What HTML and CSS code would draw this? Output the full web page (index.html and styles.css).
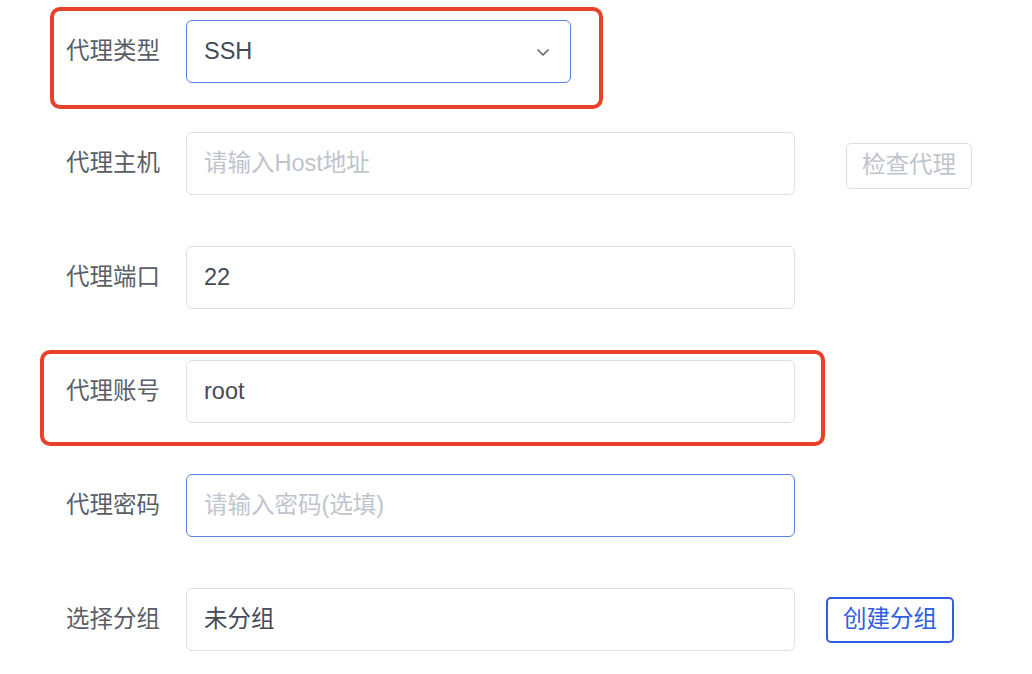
FILE: index.html
```html
<!DOCTYPE html>
<html lang="zh-CN">
  <head>
    <meta charset="UTF-8" />
    <meta name="viewport" content="width=device-width, initial-scale=1.0" />
    <title>代理设置</title>
    <link rel="stylesheet" href="styles.css">
  </head>

  <body>
    <form class="proxy-form">
      <div class="row row-first">
        <span class="mark mark-type"></span>
        <label class="label">代理类型</label>
        <div class="field field-active select">
          <span class="value">SSH</span>
          <svg class="arrow" width="16" height="16" viewBox="0 0 16 16">
            <path d="M2.5 5.5 8 11 13.5 5.5" fill="none" stroke="#5a5e66" stroke-width="1.5" />
          </svg>
        </div>
      </div>

      <div class="row">
        <label class="label">代理主机</label>
        <div class="field"><span class="placeholder">请输入Host地址</span></div>
        <button type="button" class="btn btn-disabled">检查代理</button>
      </div>

      <div class="row">
        <label class="label">代理端口</label>
        <div class="field"><span class="value">22</span></div>
      </div>

      <div class="row">
        <span class="mark mark-user"></span>
        <label class="label">代理账号</label>
        <div class="field"><span class="value">root</span></div>
      </div>

      <div class="row">
        <label class="label">代理密码</label>
        <div class="field field-active"><span class="placeholder">请输入密码(选填)</span></div>
      </div>

      <div class="row">
        <label class="label">选择分组</label>
        <div class="field"><span class="value">未分组</span></div>
        <button type="button" class="btn btn-primary">创建分组</button>
      </div>
    </form>
  </body>
</html>
```

FILE: styles.css
```css
body {
  margin: 0;
  background-color: #fff;
  font-family: "Liberation Sans", "Noto Sans CJK SC", sans-serif;
  color: #4a4e57;
}

.proxy-form {
  padding-top: 20px;
}

.row {
  position: relative;
  display: flex;
  align-items: center;
  height: 63px;
  margin-bottom: 51px;
}

.row-first {
  margin-bottom: 49px;
}

.label {
  width: 120px;
  margin-left: 66px;
  font-size: 23.5px;
  line-height: 1;
  color: #5a5e66;
}

.field {
  display: flex;
  align-items: center;
  width: 609px;
  height: 63px;
  padding: 0 17px;
  box-sizing: border-box;
  border: 1.5px solid #dcdfe6;
  border-radius: 6px;
  font-size: 23.5px;
  line-height: 1;
}

.field-active {
  border-color: #5b7fe3;
}

.select {
  width: 385px;
  justify-content: space-between;
  padding-right: 19px;
}

.value {
  color: #454a56;
}

.placeholder {
  color: #c0c4cc;
}

.btn {
  height: 46px;
  padding: 0 15px;
  background-color: #fff;
  border-radius: 5px;
  font-family: inherit;
  font-size: 23.5px;
  line-height: 1;
  cursor: pointer;
}

.btn-disabled {
  margin-left: 51px;
  margin-top: 5px;
  border: 1.5px solid #dcdfe6;
  color: #c0c4cc;
}

.btn-primary {
  margin-left: 31px;
  border: 2px solid #2f5ee3;
  color: #2f5ee3;
}

/* recuadros rojos de anotacion */
.mark {
  position: absolute;
  border: 4px solid #e8402a;
  border-radius: 10px;
  box-sizing: border-box;
}

.mark-type {
  top: -13px;
  left: 50px;
  width: 553px;
  height: 102px;
}

.mark-user {
  top: -10px;
  left: 40px;
  width: 785px;
  height: 96px;
}
```
